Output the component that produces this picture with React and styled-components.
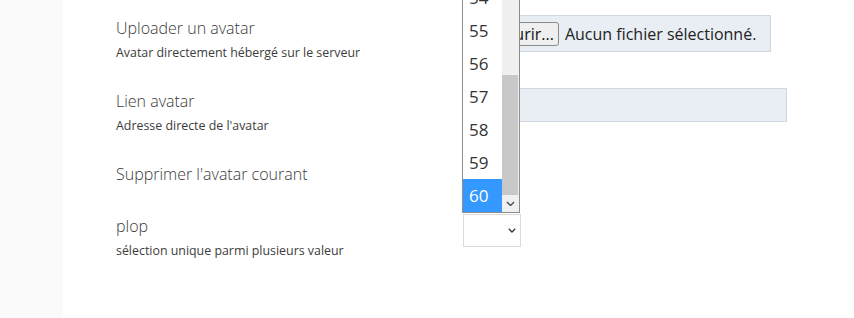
import React from 'react';
import styled, { createGlobalStyle } from 'styled-components';

const GlobalStyle = createGlobalStyle`
  html, body {
    margin: 0;
    padding: 0;
    background: #fff;
  }

  body {
    font-family: 'Open Sans', 'DejaVu Sans', sans-serif;
    color: #333;
    overflow: hidden;
  }
`;

const Page = styled.div`
  display: flex;
  min-height: 318px;
`;

const Sidebar = styled.aside`
  width: 63px;
  flex-shrink: 0;
  background: #fafafa;
`;

const Main = styled.main`
  flex: 1;
  padding: 17px 0 0 53px;
`;

const Form = styled.form`
  display: flex;
  flex-direction: column;
  gap: 26px;
`;

const Row = styled.div`
  display: grid;
  grid-template-columns: 347px 1fr;
  align-items: start;
  min-height: ${(p) => p.$minHeight || 0}px;
`;

const Label = styled.div`
  display: flex;
  flex-direction: column;
`;

const Title = styled.span`
  font-size: 16px;
  font-weight: 300;
  line-height: 22px;
  color: #3a3a3a;
`;

const Hint = styled.span`
  margin-top: 3px;
  font-size: 12.4px;
  font-weight: 400;
  line-height: 22px;
  color: #3c3c3c;
`;

const Control = styled.div`
  position: relative;
  margin-top: ${(p) => p.$offset || 0}px;
`;

const FileBox = styled.div`
  display: flex;
  align-items: center;
  gap: 6px;
  box-sizing: border-box;
  width: 308px;
  height: 37px;
  padding: 0 6px 0 3px;
  background: #e8eef3;
  border: 1px solid #cfd8e0;
  font-size: 16px;
  color: #222;
`;

const BrowseButton = styled.button`
  font-family: inherit;
  font-size: 16px;
  line-height: 20px;
  height: 24px;
  padding: 0 4px;
  color: #111;
  background: #efefef;
  border: 1px solid #8a8a8a;
  border-radius: 3px;
`;

const TextInput = styled.input`
  box-sizing: border-box;
  width: 324px;
  height: 34px;
  background: #e8eef3;
  border: 1px solid #cfd8e0;
  outline: none;
`;

const SelectBox = styled.div`
  display: flex;
  align-items: center;
  justify-content: flex-end;
  box-sizing: border-box;
  width: 58px;
  height: 33px;
  padding-right: 4px;
  background: #fff;
  border: 1px solid #dadada;
  color: #333;
`;

const ListBox = styled.div`
  position: absolute;
  left: -1px;
  bottom: calc(100% + 1px);
  display: flex;
  box-sizing: border-box;
  width: 58px;
  height: 233px;
  background: #fff;
  border: 1px solid #8c8c8c;
`;

const Options = styled.ul`
  flex: 1;
  display: flex;
  flex-direction: column;
  justify-content: flex-end;
  margin: 0;
  padding: 0;
  list-style: none;
  overflow: hidden;
`;

const Option = styled.li`
  flex-shrink: 0;
  height: 33px;
  padding-left: 6px;
  font-size: 17px;
  line-height: 33px;
  color: ${(p) => (p.$selected ? '#fff' : '#333')};
  background: ${(p) => (p.$selected ? '#3399ff' : 'transparent')};
`;

const Scrollbar = styled.div`
  display: flex;
  flex-direction: column;
  width: 17px;
  background: #f0f0f0;
`;

const Track = styled.div`
  flex: 1;
  display: flex;
  flex-direction: column;
  justify-content: flex-end;
`;

const Thumb = styled.div`
  height: 120px;
  margin: 0 1px 0 0;
  background: #c8c8c8;
`;

const ArrowButton = styled.div`
  display: flex;
  align-items: center;
  justify-content: center;
  height: 17px;
  background: #f0f0f0;
  color: #505050;
`;

const Chevron = ({ size = 9 }) => (
  <svg width={size} height={size * 0.6} viewBox="0 0 10 6" fill="none">
    <path d="M1 1l4 4 4-4" stroke="currentColor" strokeWidth="1.6" />
  </svg>
);

const options = [54, 55, 56, 57, 58, 59, 60];

export default function App() {
  return (
    <Page>
      <GlobalStyle />
      <Sidebar />
      <Main>
        <Form>
          <Row>
            <Label>
              <Title>Uploader un avatar</Title>
              <Hint>Avatar directement hébergé sur le serveur</Hint>
            </Label>
            <Control $offset={-2}>
              <FileBox>
                <BrowseButton type="button">Parcourir...</BrowseButton>
                <span>Aucun fichier sélectionné.</span>
              </FileBox>
            </Control>
          </Row>

          <Row>
            <Label>
              <Title>Lien avatar</Title>
              <Hint>Adresse directe de l'avatar</Hint>
            </Label>
            <Control $offset={-2}>
              <TextInput type="text" />
            </Control>
          </Row>

          <Row $minHeight={26}>
            <Label>
              <Title>Supprimer l'avatar courant</Title>
            </Label>
            <Control />
          </Row>

          <Row>
            <Label>
              <Title>plop</Title>
              <Hint>sélection unique parmi plusieurs valeur</Hint>
            </Label>
            <Control $offset={-1}>
              <SelectBox>
                <Chevron size={8} />
              </SelectBox>
              <ListBox>
                <Options>
                  {options.map((n) => (
                    <Option key={n} $selected={n === 60}>
                      {n}
                    </Option>
                  ))}
                </Options>
                <Scrollbar>
                  <Track>
                    <Thumb />
                  </Track>
                  <ArrowButton>
                    <Chevron size={9} />
                  </ArrowButton>
                </Scrollbar>
              </ListBox>
            </Control>
          </Row>
        </Form>
      </Main>
    </Page>
  );
}
